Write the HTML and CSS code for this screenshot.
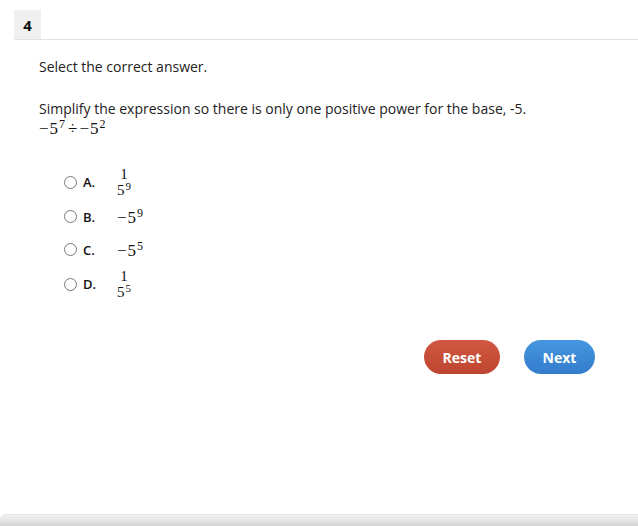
FILE: index.html
```html
<!DOCTYPE html>
<html>
<head>
<meta charset="utf-8">
<link rel="stylesheet" href="styles.css">
</head>
<body>
<div class="page">
  <div class="header">
    <div class="tab">4</div>
  </div>
  <div class="content">
    <p class="instr">Select the correct answer.</p>
    <p class="question">Simplify the expression so there is only one positive power for the base, -5.</p>
    <div class="math expr"><span class="minus">−</span>5<sup>7</sup><span class="div">÷</span><span class="minus">−</span>5<sup>2</sup></div>
    <div class="options">
      <div class="opt frac-opt">
        <span class="radio"></span><span class="lbl">A.</span>
        <span class="math frac"><span class="num">1</span><span class="den">5<sup>9</sup></span></span>
      </div>
      <div class="opt">
        <span class="radio"></span><span class="lbl">B.</span>
        <span class="math single"><span class="minus">−</span>5<sup>9</sup></span>
      </div>
      <div class="opt">
        <span class="radio"></span><span class="lbl">C.</span>
        <span class="math single"><span class="minus">−</span>5<sup>5</sup></span>
      </div>
      <div class="opt frac-opt">
        <span class="radio"></span><span class="lbl">D.</span>
        <span class="math frac"><span class="num">1</span><span class="den">5<sup>5</sup></span></span>
      </div>
    </div>
    <div class="buttons">
      <button class="btn reset">Reset</button>
      <button class="btn next">Next</button>
    </div>
  </div>
  <div class="spacer"></div>
  <div class="footer"></div>
</div>
</body>
</html>
```
FILE: styles.css
```css
html, body {
  margin: 0;
  padding: 0;
  background: #ffffff;
}
body {
  font-family: "Open Sans", "Liberation Sans", sans-serif;
  font-size: 14px;
  color: #222;
}
.page {
  width: 638px;
  height: 526px;
  display: flex;
  flex-direction: column;
  overflow: hidden;
}
.header {
  margin-left: 14px;
  margin-top: 10px;
  border-bottom: 1px solid #e2e2e2;
  display: flex;
}
.tab {
  width: 27px;
  height: 29px;
  background: #f0f0f0;
  font-weight: bold;
  font-size: 15px;
  display: flex;
  align-items: center;
  justify-content: center;
  color: #111;
}
.content {
  padding-left: 39px;
}
.instr {
  margin: 17px 0 0 0;
  line-height: 20px;
}
.question {
  margin: 23px 0 0 0;
  line-height: 18px;
}
.math {
  font-family: "Liberation Serif", "DejaVu Serif", serif;
  color: #111;
}
.expr {
  font-size: 17px;
  line-height: 18px;
  padding-top: 2px;
}
.minus {
  display: inline-block;
  margin-right: 1px;
}
.expr sup, .single sup {
  font-size: 12px;
  vertical-align: 6px;
  line-height: 0;
  margin-left: 1px;
}
.div {
  margin: 0 2px 0 3px;
}
.options {
  margin-top: 26px;
  margin-left: 25px;
  display: flex;
  flex-direction: column;
}
.opt {
  display: flex;
  align-items: center;
  height: 33px;
}
.frac-opt {
  height: 36px;
}
.radio {
  width: 11px;
  height: 11px;
  border: 1px solid #777;
  border-radius: 50%;
  background: #fff;
  box-sizing: content-box;
}
.lbl {
  margin-left: 6px;
  width: 34px;
  font-size: 13px;
  font-weight: 600;
  color: #111;
}
.frac {
  display: inline-flex;
  flex-direction: column;
  align-items: center;
  font-size: 15px;
  line-height: 13px;
  gap: 3px;
}
.den sup {
  font-size: 11px;
  vertical-align: 5px;
  line-height: 0;
  margin-left: 1px;
}
.single {
  font-size: 17px;
  margin-top: 3px;
}
.buttons {
  display: flex;
  gap: 24px;
  margin-left: 385px;
  margin-top: 38px;
}
.btn {
  height: 34px;
  border: none;
  border-radius: 17px;
  color: #fff;
  font-family: "Open Sans", "Liberation Sans", sans-serif;
  font-weight: bold;
  font-size: 14px;
  padding: 0;
}
.reset {
  width: 76px;
  background: linear-gradient(#d05842, #be4630);
}
.next {
  width: 71px;
  background: linear-gradient(#4596e0, #337ccc);
}
.spacer {
  flex: 1;
}
.footer {
  height: 11px;
  border-top: 1px solid #e4e4e4;
  background: linear-gradient(#f2f2f2, #d4d4d4);
  border-top-left-radius: 6px;
}
```
